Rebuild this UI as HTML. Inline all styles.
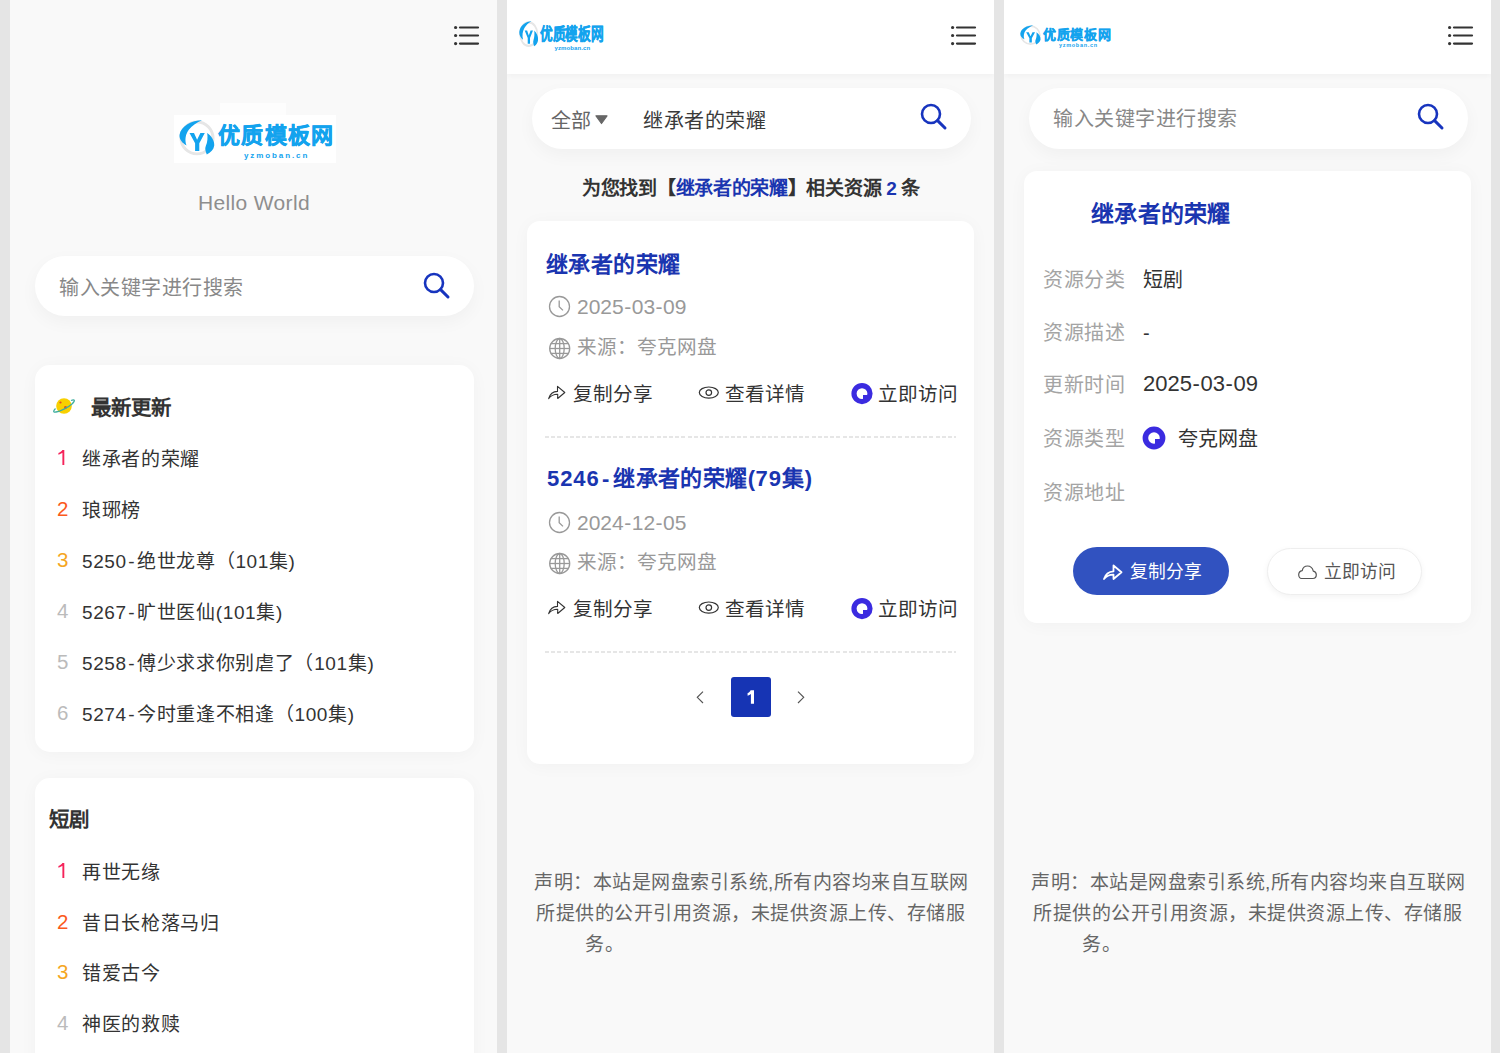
<!DOCTYPE html>
<html lang="zh-CN">
<head>
<meta charset="utf-8">
<style>
*{box-sizing:border-box;margin:0;padding:0}
html,body{width:1500px;height:1053px;overflow:hidden;background:#e5e5e5;font-family:"Liberation Sans",sans-serif;color:#333}
.p{position:absolute;top:0;width:487px;height:1053px;overflow:hidden;background:#f9f9f9}
.t{position:absolute;white-space:nowrap;line-height:1}
.abs{position:absolute}
.hdr{position:absolute;left:0;top:0;width:487px;height:74px;background:#fff;box-shadow:0 2px 6px rgba(0,0,0,.04)}
.sb{position:absolute;background:#fff;border-radius:31px;box-shadow:0 6px 18px rgba(0,0,0,.04)}
.card{position:absolute;background:#fff;border-radius:15px;box-shadow:0 2px 18px rgba(0,0,0,.035)}
.n1{color:#f5245a}.n2{color:#fb5a1c}.n3{color:#f5a623}.n4{color:#bbb}
.blue{color:#1a35b0}
.d{letter-spacing:.6px}
.h{padding:0 1.6px}
</style>
</head>
<body>
<svg width="0" height="0" style="position:absolute"><defs><symbol id="ylogo" viewBox="7 8 36 35.5">
<circle cx="25" cy="26" r="16" fill="none" stroke="#e6e6e6" stroke-width="3"/>
<path d="M30 8.3 C20 8.5 8.5 14 7.5 23 C7.2 27 10 31 14.5 33.5 C12.5 28 13.5 22 17 17.5 C20 13.5 25 10.5 30 8.3Z" fill="#13a3ee"/>
<path d="M35.2 21 C39.5 24 42.8 29 42.2 33.8 C41.7 37.5 38.8 40.5 34.8 42.5 C33.6 39.5 32.6 36.5 33.8 34 C35.6 30.5 35.8 25 35.2 21Z" fill="#13a3ee"/>
<path d="M17.5 21 L22 21 L25.1 27.8 L28.4 21 L32.8 21 L27.3 31.3 L27.3 39 L23.1 39 L23.1 31.3Z" fill="#13a3ee"/>
</symbol></defs></svg>

<!-- ============ PANEL 1 ============ -->
<div class="p" style="left:10px;background:#f9f9f9">
  <!-- menu -->
  <svg class="abs" style="left:442px;top:24px" width="28" height="24" viewBox="0 0 28 24">
    <g fill="#333"><circle cx="3.6" cy="3.5" r="1.6"/><circle cx="3.6" cy="11.5" r="1.6"/><circle cx="3.6" cy="19.6" r="1.6"/></g>
    <g stroke="#333" stroke-width="2.2" stroke-linecap="round"><line x1="8" y1="3.5" x2="26" y2="3.5"/><line x1="8" y1="11.5" x2="26" y2="11.5"/><line x1="8" y1="19.6" x2="26" y2="19.6"/></g>
  </svg>
  <!-- logo -->
  <div class="abs" style="left:210px;top:103px;width:66px;height:12px;background:#fdfdfd"></div>
  <div class="abs" style="left:164px;top:115px;width:162px;height:48px;background:#fff"></div>
  <svg class="abs" style="left:169px;top:120px" width="36" height="35.5" viewBox="0 0 36 35.5" preserveAspectRatio="none"><use href="#ylogo"/></svg>
  <div class="t" style="left:208px;top:125px;font-size:22px;letter-spacing:1.3px;font-weight:900;color:#13a3ee;-webkit-text-stroke:.5px #13a3ee">优质模板网</div>
  <div class="t" style="left:234px;top:151.5px;font-size:8px;font-weight:bold;color:#13a3ee;letter-spacing:1.9px">yzmoban.cn</div>
  <div class="t" style="left:188px;top:192px;font-size:21px;letter-spacing:.35px;color:#8e8e8e">Hello World</div>

  <!-- search -->
  <div class="sb" style="left:25px;top:256px;width:439px;height:60px"></div>
  <div class="t" style="left:49px;top:278px;font-size:20px;letter-spacing:.5px;color:#888">输入关键字进行搜索</div>
  <svg class="abs" style="left:412px;top:271px" width="30" height="30" viewBox="0 0 30 30">
    <circle cx="12" cy="12" r="9" fill="none" stroke="#1734be" stroke-width="2.6"/>
    <line x1="18.6" y1="18.6" x2="26" y2="26" stroke="#1734be" stroke-width="3" stroke-linecap="round"/>
  </svg>

  <!-- card 1 -->
  <div class="card" style="left:25px;top:365px;width:439px;height:387px"></div>
  <svg class="abs" style="left:42px;top:396px" width="24" height="20" viewBox="0 0 24 20">
    <circle cx="12" cy="10" r="7.8" fill="#f8d000"/>
    <circle cx="8.5" cy="6.5" r="1.1" fill="#e04a2a"/>
    <circle cx="13.5" cy="11.5" r="1.4" fill="#e04a2a"/>
    <path d="M19 4.5 C23 3 23.5 4.5 20 8 C16 11.5 8 15.5 4 16 C1 16.5 1 15 3.5 12.5" fill="none" stroke="#3fae9f" stroke-width="1.3"/>
  </svg>
  <div class="t" style="left:81px;top:398px;font-size:20.5px;font-weight:bold;color:#333">最新更新</div>

  <svg class="abs" style="left:47px;top:449px" width="12" height="17" viewBox="0 0 12 17"><path d="M5.4 1.1 H7.3 V16 H5.4 V3.7 C4.5 4.5 3.1 5.2 1.4 5.7 V4.1 C3 3.4 4.5 2.3 5.4 1.1Z" fill="#f5245a"/></svg>
  <div class="t" style="left:72px;top:450px;font-size:19px;letter-spacing:.7px">继承者的荣耀</div>
  <div class="t n2" style="left:47px;top:498.5px;font-size:20.5px">2</div>
  <div class="t" style="left:72px;top:501px;font-size:19px;letter-spacing:.7px">琅琊榜</div>
  <div class="t n3" style="left:47px;top:549.5px;font-size:20.5px">3</div>
  <div class="t" style="left:72px;top:552px;font-size:19px;letter-spacing:.7px"><span class="d">5250</span><span class="h">-</span>绝世龙尊（<span class="d">101</span>集)</div>
  <div class="t n4" style="left:47px;top:600.5px;font-size:20.5px">4</div>
  <div class="t" style="left:72px;top:603px;font-size:19px;letter-spacing:.7px"><span class="d">5267</span><span class="h">-</span>旷世医仙(<span class="d">101</span>集)</div>
  <div class="t n4" style="left:47px;top:651.5px;font-size:20.5px">5</div>
  <div class="t" style="left:72px;top:654px;font-size:19px;letter-spacing:.7px"><span class="d">5258</span><span class="h">-</span>傅少求求你别虐了（<span class="d">101</span>集)</div>
  <div class="t n4" style="left:47px;top:702.5px;font-size:20.5px">6</div>
  <div class="t" style="left:72px;top:705px;font-size:19px;letter-spacing:.7px"><span class="d">5274</span><span class="h">-</span>今时重逢不相逢（<span class="d">100</span>集)</div>

  <!-- card 2 -->
  <div class="card" style="left:25px;top:778px;width:439px;height:300px"></div>
  <div class="t" style="left:39px;top:810px;font-size:20.5px;font-weight:bold;color:#333">短剧</div>
  <svg class="abs" style="left:47px;top:862px" width="12" height="17" viewBox="0 0 12 17"><path d="M5.4 1.1 H7.3 V16 H5.4 V3.7 C4.5 4.5 3.1 5.2 1.4 5.7 V4.1 C3 3.4 4.5 2.3 5.4 1.1Z" fill="#f5245a"/></svg>
  <div class="t" style="left:72px;top:863px;font-size:19px;letter-spacing:.7px">再世无缘</div>
  <div class="t n2" style="left:47px;top:911.5px;font-size:20.5px">2</div>
  <div class="t" style="left:72px;top:914px;font-size:19px;letter-spacing:.7px">昔日长枪落马归</div>
  <div class="t n3" style="left:47px;top:961.5px;font-size:20.5px">3</div>
  <div class="t" style="left:72px;top:964px;font-size:19px;letter-spacing:.7px">错爱古今</div>
  <div class="t n4" style="left:47px;top:1012.5px;font-size:20.5px">4</div>
  <div class="t" style="left:72px;top:1015px;font-size:19px;letter-spacing:.7px">神医的救赎</div>
</div>

<!-- ============ PANEL 2 ============ -->
<div class="p" style="left:507px">
  <div class="hdr"></div>
  <!-- logo small -->
  <svg class="abs" style="left:12px;top:21px" width="19.5" height="26" viewBox="0 0 36 35.5" preserveAspectRatio="none"><use href="#ylogo"/></svg>
  <div class="t" style="left:33px;top:26px;font-size:17px;font-weight:900;color:#13a3ee;-webkit-text-stroke:.4px #13a3ee;transform:scaleX(.745);transform-origin:0 0">优质模板网</div>
  <div class="t" style="left:47.5px;top:44.5px;font-size:6px;font-weight:bold;color:#13a3ee;letter-spacing:.1px">yzmoban.cn</div>
  <!-- menu -->
  <svg class="abs" style="left:442px;top:24px" width="28" height="24" viewBox="0 0 28 24">
    <g fill="#333"><circle cx="3.6" cy="3.5" r="1.6"/><circle cx="3.6" cy="11.5" r="1.6"/><circle cx="3.6" cy="19.6" r="1.6"/></g>
    <g stroke="#333" stroke-width="2.2" stroke-linecap="round"><line x1="8" y1="3.5" x2="26" y2="3.5"/><line x1="8" y1="11.5" x2="26" y2="11.5"/><line x1="8" y1="19.6" x2="26" y2="19.6"/></g>
  </svg>
  <!-- search -->
  <div class="sb" style="left:25px;top:88px;width:439px;height:61px"></div>
  <div class="t" style="left:44px;top:110.5px;font-size:20px;color:#666">全部</div>
  <svg class="abs" style="left:88px;top:115px" width="13" height="10" viewBox="0 0 13 10"><path d="M1 .8 L12 .8 L6.5 8.5Z" fill="#666" stroke="#666" stroke-width="1.2" stroke-linejoin="round"/></svg>
  <div class="t" style="left:136px;top:110.5px;font-size:20px;letter-spacing:.5px;color:#3a3a3a">继承者的荣耀</div>
  <svg class="abs" style="left:412px;top:102px" width="30" height="30" viewBox="0 0 30 30">
    <circle cx="12" cy="12" r="9" fill="none" stroke="#1734be" stroke-width="2.6"/>
    <line x1="18.6" y1="18.6" x2="26" y2="26" stroke="#1734be" stroke-width="3" stroke-linecap="round"/>
  </svg>
  <!-- count -->
  <div class="t" style="left:75px;top:179px;font-size:19px;letter-spacing:-.3px;font-weight:bold;color:#333">为您找到【<span class="blue">继承者的荣耀</span>】相关资源 <span class="blue">2</span> 条</div>

  <!-- result card -->
  <div class="card" style="left:20px;top:221px;width:447px;height:543px;border-radius:13px"></div>

  <div class="t blue" style="left:39px;top:254px;font-size:22px;letter-spacing:.4px;font-weight:bold">继承者的荣耀</div>
  <svg class="abs" style="left:41px;top:295px" width="24" height="24" viewBox="0 0 24 24">
    <circle cx="11.5" cy="11.5" r="10" fill="none" stroke="#999" stroke-width="1.3"/>
    <path d="M11.2 5.6 V11.8 L15 15.4" fill="none" stroke="#999" stroke-width="1.3"/>
  </svg>
  <div class="t" style="left:70px;top:296px;font-size:21px;color:#999">2025<span style="padding:0 .5px">-</span>03<span style="padding:0 .5px">-</span>09</div>
  <svg class="abs" style="left:41px;top:336.5px" width="24" height="24" viewBox="0 0 24 24">
    <g fill="none" stroke="#999" stroke-width="1.3">
    <circle cx="11.7" cy="11.5" r="10"/>
    <ellipse cx="11.7" cy="11.5" rx="4.5" ry="10"/>
    <line x1="11.7" y1="1.5" x2="11.7" y2="21.5"/>
    <line x1="2.6" y1="6.6" x2="20.8" y2="6.6"/>
    <line x1="1.7" y1="11.5" x2="21.7" y2="11.5"/>
    <line x1="2.6" y1="16.4" x2="20.8" y2="16.4"/>
    </g>
  </svg>
  <div class="t" style="left:70px;top:338px;font-size:19.6px;color:#999">来源：夸克网盘</div>

  <svg class="abs" style="left:40px;top:384px" width="20" height="18" viewBox="0 0 20 18">
    <path d="M1.6 14.6 C3 10 6 7.6 10.5 7.4 V2.3 L17.8 8.5 L10.7 14.5 V10.3 C7 10.2 4 11.6 1.6 14.6Z" fill="none" stroke="#333" stroke-width="1.1" stroke-linejoin="round"/>
  </svg>
  <div class="t" style="left:66px;top:385px;font-size:19.6px;color:#333">复制分享</div>
  <svg class="abs" style="left:190px;top:385px" width="24" height="16" viewBox="0 0 24 16">
    <ellipse cx="11.8" cy="7.6" rx="9.5" ry="5.6" fill="none" stroke="#333" stroke-width="1.2"/>
    <circle cx="11.8" cy="7.6" r="2.8" fill="none" stroke="#333" stroke-width="1.2"/>
  </svg>
  <div class="t" style="left:218px;top:385px;font-size:19.6px;color:#333">查看详情</div>
  <svg class="abs" style="left:343px;top:382px" width="24" height="24" viewBox="0 0 24 24">
    <circle cx="12" cy="11.6" r="8" fill="none" stroke="#3b2be0" stroke-width="5.2"/>
    <path d="M13 13 H17.5 V17.5 H13Z" fill="#3b2be0"/>
  </svg>
  <div class="t" style="left:371px;top:385px;font-size:19.6px;color:#333">立即访问</div>
  <div class="abs" style="left:38px;top:436px;width:411px;height:2px;background:repeating-linear-gradient(90deg,#e6e6e6 0 4px,transparent 4px 6.2px)"></div>

  <div class="t blue" style="left:40px;top:468px;font-size:22px;letter-spacing:.4px;font-weight:bold"><span style="letter-spacing:.9px">5246</span><span style="padding:0 3.5px 0 2.5px">-</span>继承者的荣耀(<span style="letter-spacing:1.2px">79</span>集)</div>
  <svg class="abs" style="left:41px;top:511px" width="24" height="24" viewBox="0 0 24 24">
    <circle cx="11.5" cy="11.5" r="10" fill="none" stroke="#999" stroke-width="1.3"/>
    <path d="M11.2 5.6 V11.8 L15 15.4" fill="none" stroke="#999" stroke-width="1.3"/>
  </svg>
  <div class="t" style="left:70px;top:512px;font-size:21px;color:#999">2024<span style="padding:0 .5px">-</span>12<span style="padding:0 .5px">-</span>05</div>
  <svg class="abs" style="left:41px;top:551.5px" width="24" height="24" viewBox="0 0 24 24">
    <g fill="none" stroke="#999" stroke-width="1.3">
    <circle cx="11.7" cy="11.5" r="10"/>
    <ellipse cx="11.7" cy="11.5" rx="4.5" ry="10"/>
    <line x1="11.7" y1="1.5" x2="11.7" y2="21.5"/>
    <line x1="2.6" y1="6.6" x2="20.8" y2="6.6"/>
    <line x1="1.7" y1="11.5" x2="21.7" y2="11.5"/>
    <line x1="2.6" y1="16.4" x2="20.8" y2="16.4"/>
    </g>
  </svg>
  <div class="t" style="left:70px;top:553px;font-size:19.6px;color:#999">来源：夸克网盘</div>
  <svg class="abs" style="left:40px;top:599px" width="20" height="18" viewBox="0 0 20 18">
    <path d="M1.6 14.6 C3 10 6 7.6 10.5 7.4 V2.3 L17.8 8.5 L10.7 14.5 V10.3 C7 10.2 4 11.6 1.6 14.6Z" fill="none" stroke="#333" stroke-width="1.1" stroke-linejoin="round"/>
  </svg>
  <div class="t" style="left:66px;top:600px;font-size:19.6px;color:#333">复制分享</div>
  <svg class="abs" style="left:190px;top:600px" width="24" height="16" viewBox="0 0 24 16">
    <ellipse cx="11.8" cy="7.6" rx="9.5" ry="5.6" fill="none" stroke="#333" stroke-width="1.2"/>
    <circle cx="11.8" cy="7.6" r="2.8" fill="none" stroke="#333" stroke-width="1.2"/>
  </svg>
  <div class="t" style="left:218px;top:600px;font-size:19.6px;color:#333">查看详情</div>
  <svg class="abs" style="left:343px;top:597px" width="24" height="24" viewBox="0 0 24 24">
    <circle cx="12" cy="11.6" r="8" fill="none" stroke="#3b2be0" stroke-width="5.2"/>
    <path d="M13 13 H17.5 V17.5 H13Z" fill="#3b2be0"/>
  </svg>
  <div class="t" style="left:371px;top:600px;font-size:19.6px;color:#333">立即访问</div>
  <div class="abs" style="left:38px;top:651px;width:411px;height:2px;background:repeating-linear-gradient(90deg,#e6e6e6 0 4px,transparent 4px 6.2px)"></div>

  <!-- pagination -->
  <svg class="abs" style="left:189px;top:690px" width="10" height="15" viewBox="0 0 10 15"><path d="M7 1.7 L1.3 7.3 L7 13" fill="none" stroke="#555" stroke-width="1.15"/></svg>
  <div class="abs" style="left:224px;top:677px;width:40px;height:40px;background:#1634b4;border-radius:3px"></div>
  <svg class="abs" style="left:239px;top:689px" width="12" height="17" viewBox="0 0 12 17"><path d="M4.6 1.2 H8 V14.8 H4.9 V5.1 C4 5.8 2.9 6.3 1.6 6.7 V4.1 C3 3.5 4 2.5 4.6 1.2Z" fill="#fff"/></svg>
  <svg class="abs" style="left:290px;top:690px" width="10" height="15" viewBox="0 0 10 15"><path d="M1 1.7 L6.7 7.3 L1 13" fill="none" stroke="#555" stroke-width="1.15"/></svg>

  <!-- disclaimer -->
  <div class="t" style="left:27px;top:873px;font-size:19px;letter-spacing:.5px;color:#666">声明：本站是网盘索引系统,所有内容均来自互联网</div>
  <div class="t" style="left:29px;top:904px;font-size:19px;letter-spacing:.5px;color:#666">所提供的公开引用资源，未提供资源上传、存储服</div>
  <div class="t" style="left:78px;top:935px;font-size:19px;letter-spacing:.5px;color:#666">务。</div>
</div>

<!-- ============ PANEL 3 ============ -->
<div class="p" style="left:1004px">
  <div class="hdr"></div>
  <svg class="abs" style="left:16px;top:25px" width="21" height="20" viewBox="0 0 36 35.5" preserveAspectRatio="none"><use href="#ylogo"/></svg>
  <div class="t" style="left:39px;top:28px;font-size:13px;letter-spacing:.7px;font-weight:900;color:#13a3ee;-webkit-text-stroke:.3px #13a3ee">优质模板网</div>
  <div class="t" style="left:55px;top:42.5px;font-size:5.5px;font-weight:bold;color:#13a3ee;letter-spacing:.7px">yzmoban.cn</div>
  <svg class="abs" style="left:442px;top:24px" width="28" height="24" viewBox="0 0 28 24">
    <g fill="#333"><circle cx="3.6" cy="3.5" r="1.6"/><circle cx="3.6" cy="11.5" r="1.6"/><circle cx="3.6" cy="19.6" r="1.6"/></g>
    <g stroke="#333" stroke-width="2.2" stroke-linecap="round"><line x1="8" y1="3.5" x2="26" y2="3.5"/><line x1="8" y1="11.5" x2="26" y2="11.5"/><line x1="8" y1="19.6" x2="26" y2="19.6"/></g>
  </svg>
  <!-- search -->
  <div class="sb" style="left:25px;top:88px;width:439px;height:61px"></div>
  <div class="t" style="left:49px;top:109px;font-size:20px;letter-spacing:.5px;color:#888">输入关键字进行搜索</div>
  <svg class="abs" style="left:412px;top:102px" width="30" height="30" viewBox="0 0 30 30">
    <circle cx="12" cy="12" r="9" fill="none" stroke="#1734be" stroke-width="2.6"/>
    <line x1="18.6" y1="18.6" x2="26" y2="26" stroke="#1734be" stroke-width="3" stroke-linecap="round"/>
  </svg>
  <!-- detail card -->
  <div class="card" style="left:20px;top:171px;width:447px;height:452px;border-radius:13px"></div>
  <div class="t blue" style="left:87px;top:203px;font-size:23px;letter-spacing:.3px;font-weight:bold">继承者的荣耀</div>
  <div class="t" style="left:39px;top:270px;font-size:20px;letter-spacing:.5px;color:#a4a4a4">资源分类</div>
  <div class="t" style="left:139px;top:270px;font-size:20px;color:#333">短剧</div>
  <div class="t" style="left:39px;top:323px;font-size:20px;letter-spacing:.5px;color:#a4a4a4">资源描述</div>
  <div class="t" style="left:139px;top:323px;font-size:20px;color:#333">-</div>
  <div class="t" style="left:39px;top:375px;font-size:20px;letter-spacing:.5px;color:#a4a4a4">更新时间</div>
  <div class="t" style="left:139px;top:373px;font-size:22px;color:#333">2025<span style="padding:0 .6px">-</span>03<span style="padding:0 .6px">-</span>09</div>
  <div class="t" style="left:39px;top:429px;font-size:20px;letter-spacing:.5px;color:#a4a4a4">资源类型</div>
  <svg class="abs" style="left:138px;top:426px" width="24" height="24" viewBox="0 0 24 24">
    <circle cx="12" cy="12" r="8.6" fill="none" stroke="#3b2be0" stroke-width="5.6"/>
    <path d="M13 13 H18 V18 H13Z" fill="#3b2be0"/>
  </svg>
  <div class="t" style="left:174px;top:429px;font-size:20px;color:#333">夸克网盘</div>
  <div class="t" style="left:39px;top:483px;font-size:20px;letter-spacing:.5px;color:#a4a4a4">资源地址</div>

  <div class="abs" style="left:69px;top:547px;width:156px;height:48px;border-radius:24px;background:#3152c0"></div>
  <svg class="abs" style="left:98px;top:563px" width="22" height="18" viewBox="0 0 22 18">
    <path d="M2 16 C3.5 11 7 8.5 11.5 8.3 V2.5 L19.5 9.3 L11.5 16 V11.6 C7.5 11.5 4.5 13 2 16Z" fill="none" stroke="#fff" stroke-width="1.8" stroke-linejoin="round"/>
  </svg>
  <div class="t" style="left:126px;top:564px;font-size:17.8px;color:#fff">复制分享</div>
  <div class="abs" style="left:263px;top:548px;width:155px;height:47px;border-radius:24px;background:#fff;border:1px solid #eee;box-shadow:0 2px 6px rgba(0,0,0,.05)"></div>
  <svg class="abs" style="left:292px;top:563px" width="22" height="18" viewBox="0 0 22 18">
    <path d="M5.5 15.5 H16.8 C19 15.5 20.3 13.8 20.3 11.8 C20.3 9.8 19 8.5 17.3 8.1 C16.5 5 14.5 3 11.5 3 C8.5 3 6.7 5.3 6.2 7.6 C4 8 2.7 9.6 2.7 11.8 C2.7 13.8 4 15.5 5.5 15.5Z" fill="none" stroke="#555" stroke-width="1.2"/>
  </svg>
  <div class="t" style="left:320px;top:564px;font-size:17.8px;color:#555">立即访问</div>

  <div class="t" style="left:27px;top:873px;font-size:19px;letter-spacing:.5px;color:#666">声明：本站是网盘索引系统,所有内容均来自互联网</div>
  <div class="t" style="left:29px;top:904px;font-size:19px;letter-spacing:.5px;color:#666">所提供的公开引用资源，未提供资源上传、存储服</div>
  <div class="t" style="left:78px;top:935px;font-size:19px;letter-spacing:.5px;color:#666">务。</div>
</div>

</body>
</html>
